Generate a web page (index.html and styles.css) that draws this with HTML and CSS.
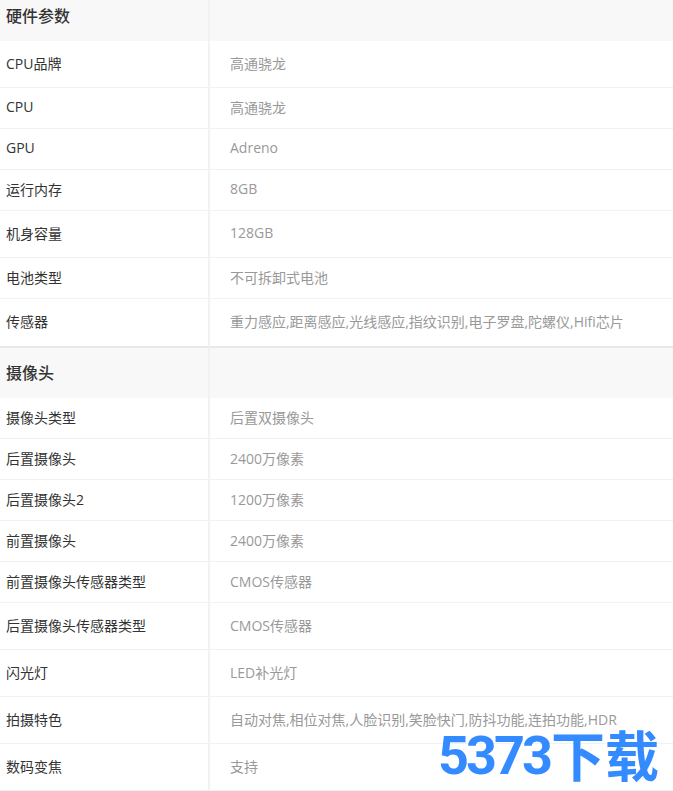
FILE: index.html
```html
<!DOCTYPE html>
<html lang="zh-CN">
<head>
<meta charset="utf-8">
<title>参数</title>
<link rel="stylesheet" href="styles.css">
</head>
<body>
<div class="specs">
  <section class="group">
    <div class="row head"><div class="key">硬件参数</div><div class="val"></div></div>
    <div class="row tall"><div class="key">CPU品牌</div><div class="val">高通骁龙</div></div>
    <div class="row"><div class="key">CPU</div><div class="val">高通骁龙</div></div>
    <div class="row"><div class="key">GPU</div><div class="val">Adreno</div></div>
    <div class="row"><div class="key">运行内存</div><div class="val">8GB</div></div>
    <div class="row tall"><div class="key">机身容量</div><div class="val">128GB</div></div>
    <div class="row"><div class="key">电池类型</div><div class="val">不可拆卸式电池</div></div>
    <div class="row tall last"><div class="key">传感器</div><div class="val">重力感应,距离感应,光线感应,指纹识别,电子罗盘,陀螺仪,Hifi芯片</div></div>
  </section>
  <section class="group second">
    <div class="row head"><div class="key">摄像头</div><div class="val"></div></div>
    <div class="row"><div class="key">摄像头类型</div><div class="val">后置双摄像头</div></div>
    <div class="row"><div class="key">后置摄像头</div><div class="val">2400万像素</div></div>
    <div class="row"><div class="key">后置摄像头2</div><div class="val">1200万像素</div></div>
    <div class="row"><div class="key">前置摄像头</div><div class="val">2400万像素</div></div>
    <div class="row"><div class="key">前置摄像头传感器类型</div><div class="val">CMOS传感器</div></div>
    <div class="row tall"><div class="key">后置摄像头传感器类型</div><div class="val">CMOS传感器</div></div>
    <div class="row tall"><div class="key">闪光灯</div><div class="val">LED补光灯</div></div>
    <div class="row tall"><div class="key">拍摄特色</div><div class="val">自动对焦,相位对焦,人脸识别,笑脸快门,防抖功能,连拍功能,HDR</div></div>
    <div class="row tall"><div class="key">数码变焦</div><div class="val">支持</div></div>
  </section>
  <div class="mark"><span class="mark-num">5373</span><span class="mark-cn">下载</span></div>
</div>
</body>
</html>
```
FILE: styles.css
```css
* { box-sizing: border-box; }
html, body { margin: 0; padding: 0; background: #fff; }
body { font-family: "Open Sans", "Noto Sans CJK SC", sans-serif; font-size: 14px; overflow: hidden; }
.specs { position: relative; width: 673px; height: 791px; overflow: hidden; }
.group.second { border-top: 2px solid #e8e8e8; }
.row { display: grid; grid-template-columns: 210px 1fr; height: 41px; border-bottom: 1px solid #f2f2f2; }
.row.tall { height: 47px; }
.row.last { border-bottom: 0; }
.row.head { background: #f8f8f8; border-bottom: 0; }
.group:first-child .row.head { height: 41px; }
.group.second .row.head { height: 50px; }
.key { display: flex; align-items: center; padding-left: 6px; padding-bottom: 4px; color: #333; border-right: 2px solid #f2f2f2; margin-bottom: -1px; }
.val { display: flex; align-items: center; padding-left: 20px; padding-bottom: 3px; color: #999; }
.row.head .key { font-size: 16px; font-weight: 500; padding-bottom: 4px; }
.group:first-child .row.head .key { padding-bottom: 13px; }
.mark { position: absolute; left: 438px; top: 724px; display: flex; align-items: center; height: 64px; color: #338bff; white-space: nowrap; font-family: Roboto, "Noto Sans CJK SC", sans-serif; font-weight: 700; }
.mark-num { font-size: 54px; letter-spacing: -3px; line-height: 64px; }
.mark-cn { font-size: 54px; line-height: 64px; margin-left: 1px; padding-top: 6px; }
```
